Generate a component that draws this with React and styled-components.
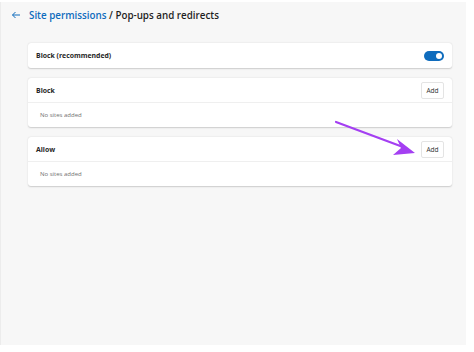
import styled, { createGlobalStyle } from 'styled-components';

const Global = createGlobalStyle`
  html, body { margin: 0; padding: 0; background: #fff; }
  body { font-family: "Open Sans", "Noto Sans", sans-serif; }
`;

const Page = styled.div`
  width: 466px;
  height: 343px;
  margin-top: 2px;
  background: #f7f7f7;
  border-left: 1px solid #ececec;
  box-sizing: border-box;
  position: relative;
`;

const Header = styled.div`
  display: flex;
  align-items: center;
  gap: 8px;
  padding: 4px 0 0 10px;
  height: 18px;
  font-size: 9.8px;
  font-weight: 600;
  color: #1f1f1f;
`;

const Crumb = styled.span`
  color: #0f6cbd;
`;

const Content = styled.div`
  display: flex;
  flex-direction: column;
  gap: 10px;
  padding: 19px 0 0 27px;
  width: 424px;
`;

const Card = styled.div`
  background: #fff;
  border-radius: 3px;
  box-shadow: 0 0.5px 1.5px rgba(0, 0, 0, 0.18);
`;

const Row = styled.div`
  display: flex;
  align-items: center;
  justify-content: space-between;
  height: ${p => p.$h || 25}px;
  padding: 0 8px 0 8px;
  border-bottom: ${p => (p.$divider ? '1px solid #efefef' : 'none')};
`;

const Title = styled.span`
  font-size: 6.9px;
  font-weight: 700;
  color: #262626;
`;

const Empty = styled.div`
  height: 24px;
  display: flex;
  align-items: center;
  padding-left: 12px;
  font-size: 6px;
  color: #707070;
`;

const AddButton = styled.button`
  font-family: inherit;
  font-size: 6.6px;
  color: #333;
  background: #fff;
  border: 1px solid #e4e4e4;
  border-radius: 2px;
  width: 23px;
  height: 17px;
  padding: 0;
`;

const Toggle = styled.div`
  width: 20px;
  height: 10px;
  border-radius: 5px;
  background: #0f6cbd;
  position: relative;
  &::after {
    content: '';
    position: absolute;
    right: 2px;
    top: 2px;
    width: 6px;
    height: 6px;
    border-radius: 50%;
    background: #fff;
  }
`;

const Pointer = styled.svg`
  position: absolute;
  left: 330px;
  top: 115px;
`;

const BackArrow = () => (
  <svg width="10" height="10" viewBox="0 0 10 10">
    <path d="M9 5H1.5M4.5 2L1.5 5l3 3" stroke="#0f6cbd" strokeWidth="1" fill="none" />
  </svg>
);

const Section = ({ title }) => (
  <Card>
    <Row $h={24} $divider>
      <Title>{title}</Title>
      <AddButton>Add</AddButton>
    </Row>
    <Empty>No sites added</Empty>
  </Card>
);

export default function App() {
  return (
    <>
      <Global />
      <Page>
        <Header>
          <BackArrow />
          <span>
            <Crumb>Site permissions</Crumb> / Pop-ups and redirects
          </span>
        </Header>
        <Content>
          <Card>
            <Row $h={25}>
              <Title>Block (recommended)</Title>
              <Toggle />
            </Row>
          </Card>
          <Section title="Block" />
          <Section title="Allow" />
        </Content>
        <Pointer width="90" height="45" viewBox="0 0 90 45">
          <path d="M5 5 L72 30" stroke="#a43ff2" strokeWidth="2.2" strokeLinecap="round" />
          <path d="M84 36 L66 22 L70 31 L62 38 Z" fill="#a43ff2" />
        </Pointer>
      </Page>
    </>
  );
}
